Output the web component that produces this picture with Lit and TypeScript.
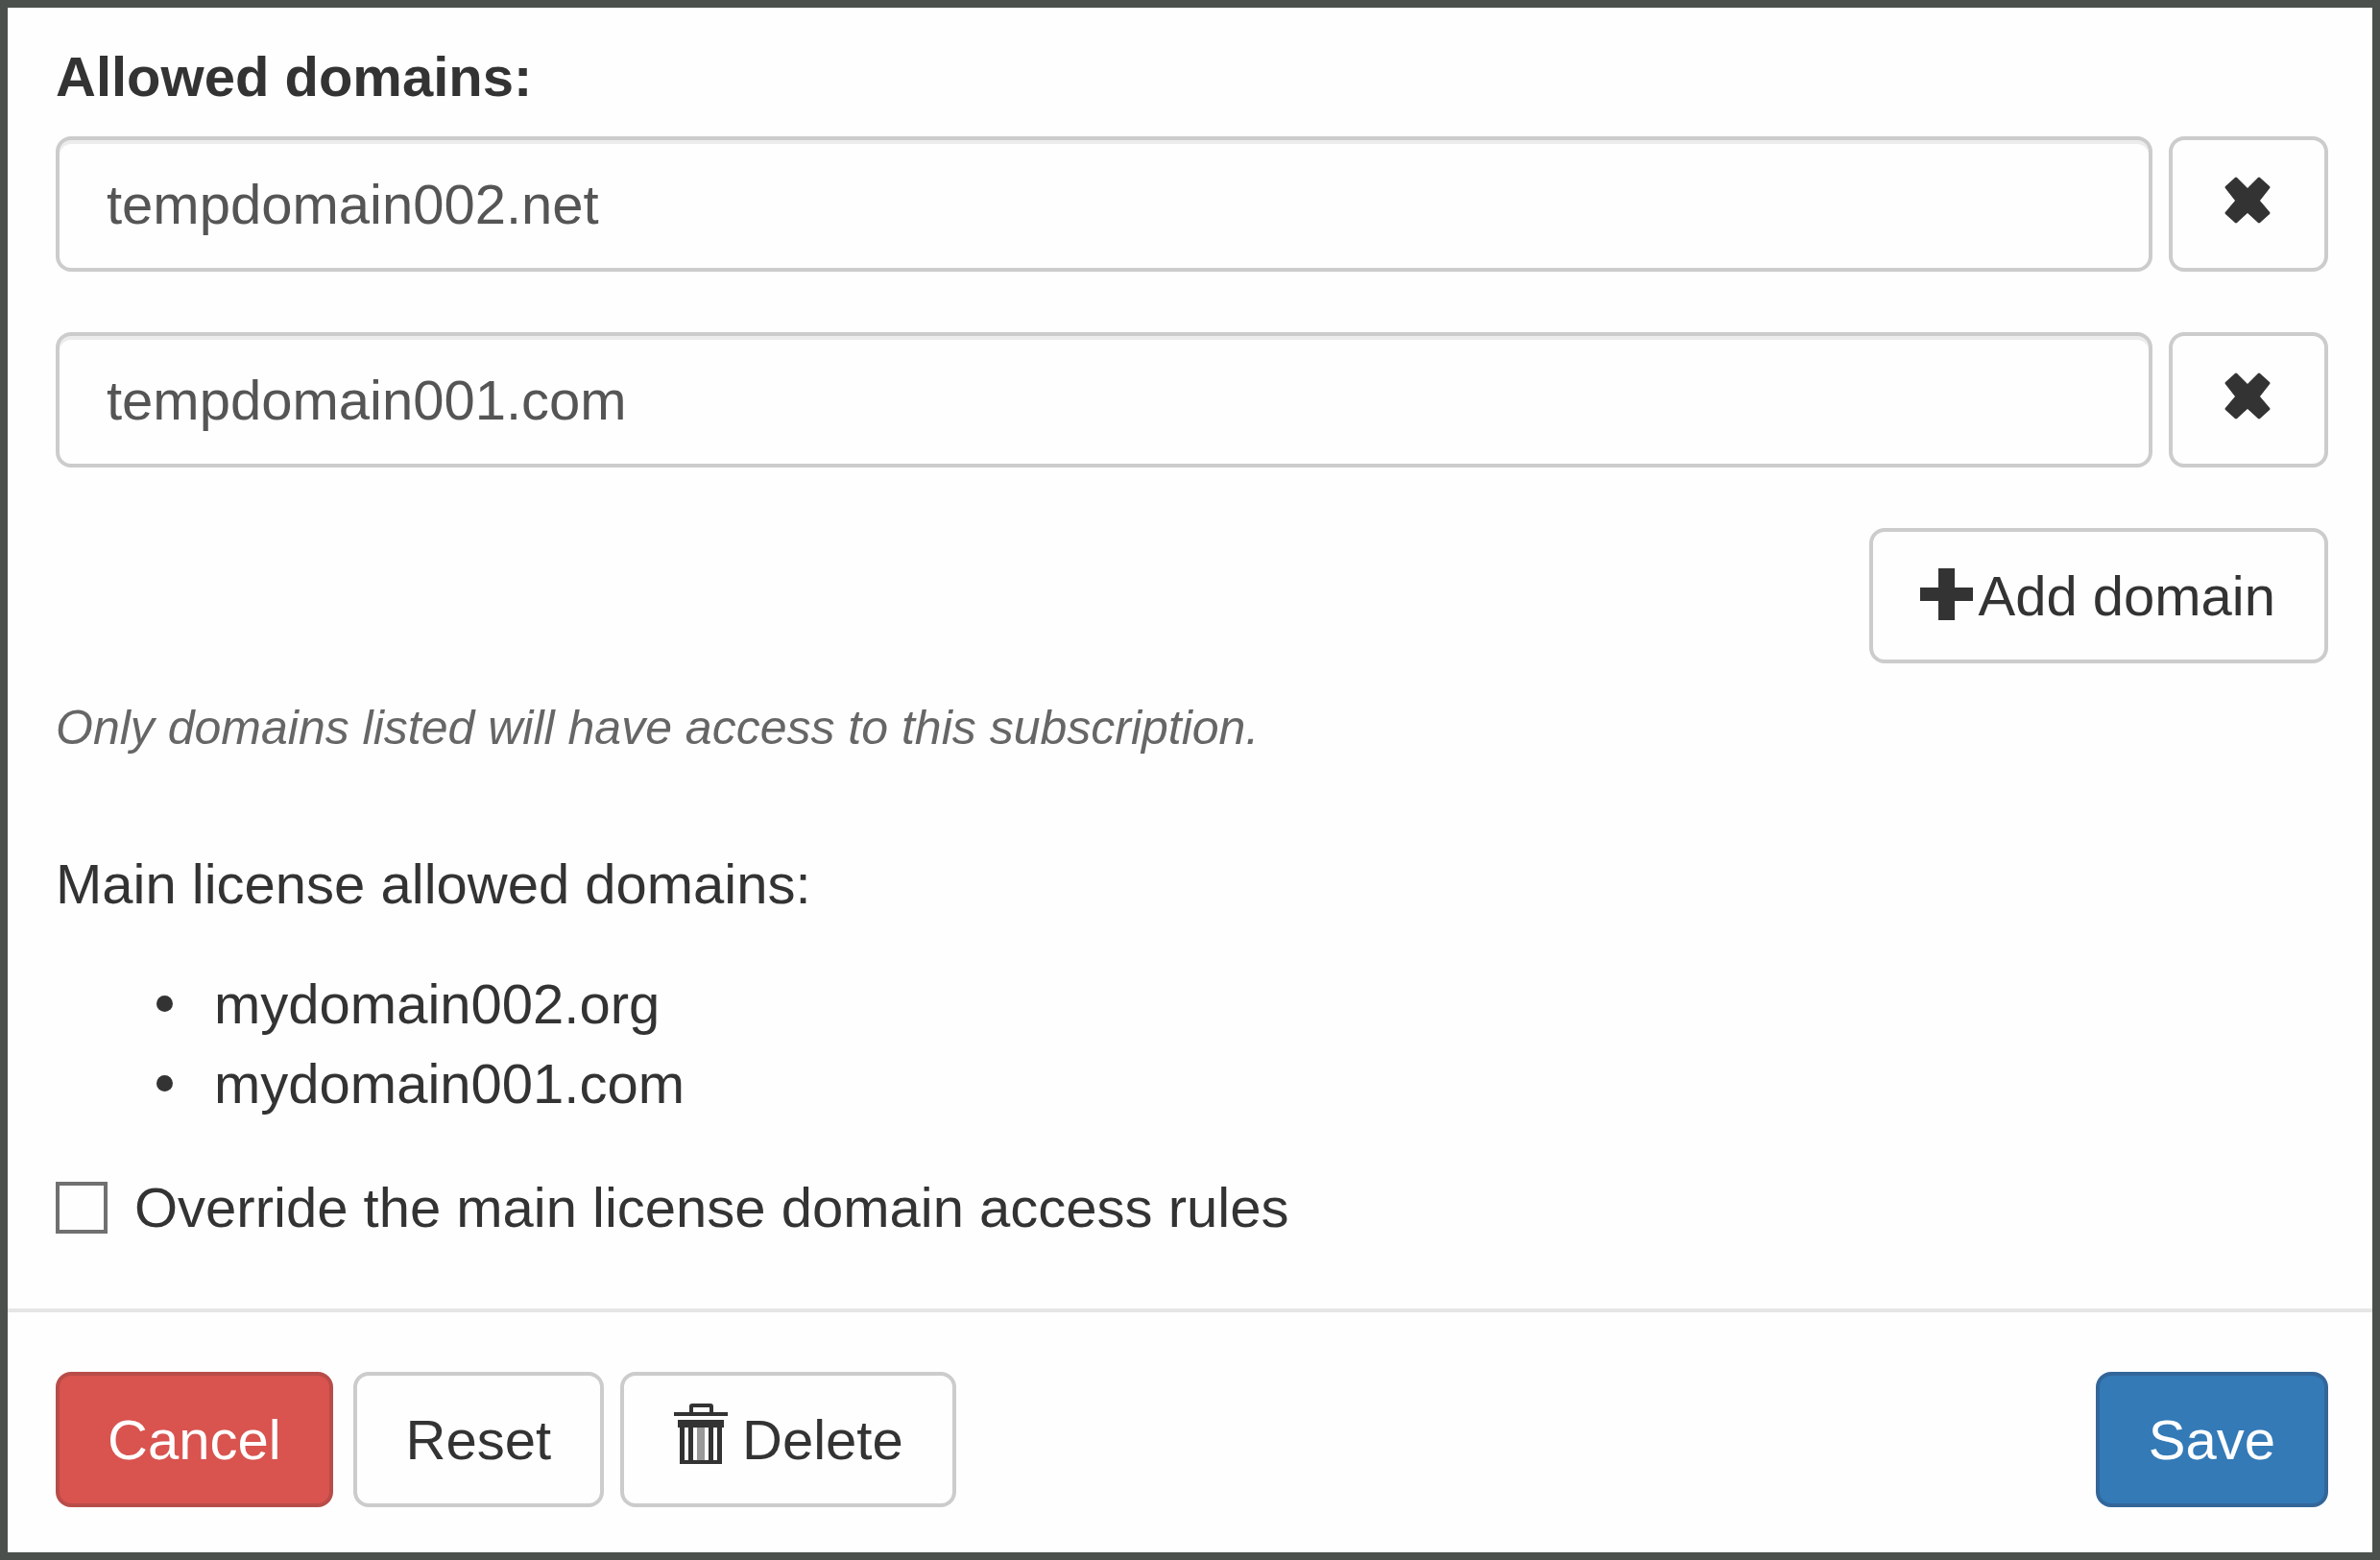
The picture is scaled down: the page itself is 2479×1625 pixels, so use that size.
import { LitElement, html, css, svg } from "lit";
import { customElement, state } from "lit/decorators.js";

const removeIcon = html`<svg class="icon" viewBox="0 0 58 58" aria-hidden="true">
  ${svg`<path d="M28 14 L40 2 L50 11 L39 25 L50 38 L40 47 L28 36 L16 47 L6 38 L17 25 L6 11 L16 2 Z"
    fill="currentColor" stroke="currentColor" stroke-width="3" stroke-linejoin="round" />`}
</svg>`;

const plusIcon = html`<svg class="icon" viewBox="0 0 58 58" aria-hidden="true">
  ${svg`<path d="M17 0 H34 V20 H53 V34 H34 V54 H17 V34 H-2 V20 H17 Z" fill="currentColor" />`}
</svg>`;

const trashIcon = html`<svg class="icon" viewBox="0 0 58 58" aria-hidden="true">
  ${svg`
    <path d="M1 0 H17 V-6 Q17 -9 20 -9 H39 Q42 -9 42 -6 V0 H57 V4 H1 Z M21 -5 V0 H38 V-5 Z"
      fill="currentColor" fill-rule="evenodd" />
    <path d="M5 8 H53 V16 H51 V54 H7 V16 H5 Z M12 16 V50 H16 V16 Z M21 16 V50 H37 V16 Z M42 16 V50 H46 V16 Z"
      fill="currentColor" fill-rule="evenodd" />
    <path d="M25 16 H33 V50 H25 Z" fill="currentColor" opacity="0.5" />`}
</svg>`;

@customElement("app-root")
export class AppRoot extends LitElement {
  @state() private domains = ["tempdomain002.net", "tempdomain001.com"];
  @state() private override_ = false;

  private initial = [...this.domains];
  private licensed = ["mydomain002.org", "mydomain001.com"];

  static styles = css`
    :host {
      display: block;
      font: 58px/83px "Liberation Sans", Arial, sans-serif;
      color: #333;
    }
    *, *::before {
      box-sizing: border-box;
    }
    .dialog {
      display: flex;
      flex-direction: column;
      min-height: 100vh;
      border: 8px solid #4c504c;
      background: #fefefe;
    }
    .body {
      flex: 1;
      padding: 30px 46px 64px 50px;
    }
    .heading {
      margin: 0 0 21px;
      font-size: 58px;
      line-height: 83px;
      font-weight: 700;
    }
    .rows {
      display: flex;
      flex-direction: column;
      gap: 63px;
    }
    .row {
      display: flex;
      gap: 17px;
    }
    .field {
      flex: 1;
      min-width: 0;
      height: 141px;
      margin: 0;
      padding: 25px 49px;
      border: 4px solid #ccc;
      border-radius: 16px;
      background: #fefefe;
      box-shadow: inset 0 4px 0 #ececec;
      font: inherit;
      color: #555;
    }
    .btn {
      display: inline-flex;
      align-items: center;
      margin: 0;
      padding: 25px 51px;
      border: 4px solid #ccc;
      border-radius: 16px;
      background: #fefefe;
      font: inherit;
      color: #333;
      white-space: nowrap;
      cursor: pointer;
    }
    .remove {
      padding: 25px 50px;
    }
    .icon {
      flex: none;
      width: 58px;
      height: 58px;
      overflow: visible;
    }
    .add {
      justify-content: flex-end;
    }
    .help {
      margin: 26px 0 0;
      font-size: 50px;
      font-style: italic;
      color: #666;
    }
    .license {
      margin: 79px 0 42px;
    }
    .list {
      margin: 0 0 46px;
      padding: 0 0 0 105px;
      list-style: none;
    }
    .item {
      display: flex;
      align-items: center;
      gap: 43px;
    }
    .item::before {
      content: "";
      width: 17px;
      height: 17px;
      border-radius: 50%;
      background: #333;
    }
    .check {
      display: flex;
      align-items: center;
      gap: 28px;
    }
    .box {
      appearance: none;
      width: 54px;
      height: 54px;
      margin: 0;
      border: 4px solid #707070;
      background: #fefefe;
    }
    .box:checked {
      background: #707070;
    }
    .footer {
      display: flex;
      gap: 17px;
      padding: 62px 46px 47px 50px;
      border-top: 4px solid #e5e5e5;
    }
    .danger {
      margin-right: 4px;
      padding: 25px 50px;
      border-color: #b84c49;
      background: #d9534f;
      color: #fff;
    }
    .delete {
      gap: 14px;
    }
    .primary {
      margin-left: auto;
      border-color: #336699;
      background: #337ab7;
      color: #fff;
    }
  `;

  private edit(index: number, value: string) {
    this.domains = this.domains.map((d, i) => (i === index ? value : d));
  }

  private remove(index: number) {
    this.domains = this.domains.filter((_, i) => i !== index);
  }

  render() {
    return html`
      <form class="dialog" @submit=${(e: Event) => e.preventDefault()}>
        <div class="body">
          <h2 class="heading" id="allowed">Allowed domains:</h2>
          <div class="rows" role="group" aria-labelledby="allowed">
            ${this.domains.map(
              (domain, i) => html`<div class="row">
                <input class="field" type="text" aria-labelledby="allowed" .value=${domain}
                  @input=${(e: Event) => this.edit(i, (e.target as HTMLInputElement).value)} />
                <button class="btn remove" type="button" aria-label="Remove domain" @click=${() => this.remove(i)}>
                  ${removeIcon}
                </button>
              </div>`
            )}
            <div class="row add">
              <button class="btn" type="button" @click=${() => (this.domains = [...this.domains, ""])}>
                ${plusIcon}<span>Add domain</span>
              </button>
            </div>
          </div>
          <p class="help">Only domains listed will have access to this subscription.</p>
          <p class="license">Main license allowed domains:</p>
          <ul class="list">
            ${this.licensed.map((d) => html`<li class="item">${d}</li>`)}
          </ul>
          <div class="check">
            <input class="box" id="override" type="checkbox" .checked=${this.override_}
              @change=${(e: Event) => (this.override_ = (e.target as HTMLInputElement).checked)} />
            <label for="override">Override the main license domain access rules</label>
          </div>
        </div>
        <div class="footer">
          <button class="btn danger" type="button">Cancel</button>
          <button class="btn" type="button" @click=${() => (this.domains = [...this.initial])}>Reset</button>
          <button class="btn delete" type="button">${trashIcon}<span>Delete</span></button>
          <button class="btn primary" type="submit">Save</button>
        </div>
      </form>
    `;
  }
}
